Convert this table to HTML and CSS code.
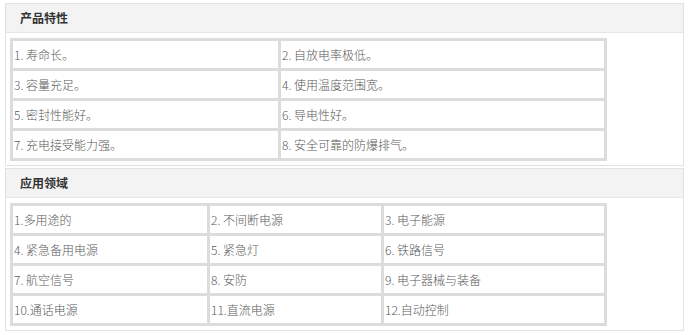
FILE: index.html
```html
<!DOCTYPE html>
<html lang="zh-CN">
<head>
<meta charset="utf-8">
<title>产品特性</title>
<link rel="stylesheet" href="styles.css">
</head>
<body>
  <section class="panel">
    <h3 class="panel-title">产品特性</h3>
    <div class="panel-body">
      <table class="spec spec-two">
        <tr><td>1. 寿命长。</td><td>2. 自放电率极低。</td></tr>
        <tr><td>3. 容量充足。</td><td>4. 使用温度范围宽。</td></tr>
        <tr><td>5. 密封性能好。</td><td>6. 导电性好。</td></tr>
        <tr><td>7. 充电接受能力强。</td><td>8. 安全可靠的防爆排气。</td></tr>
      </table>
    </div>
  </section>
  <section class="panel">
    <h3 class="panel-title">应用领域</h3>
    <div class="panel-body">
      <table class="spec spec-three">
        <tr><td>1.多用途的</td><td>2. 不间断电源</td><td>3. 电子能源</td></tr>
        <tr><td>4. 紧急备用电源</td><td>5. 紧急灯</td><td>6. 铁路信号</td></tr>
        <tr><td>7. 航空信号</td><td>8. 安防</td><td>9. 电子器械与装备</td></tr>
        <tr><td>10.通话电源</td><td>11.直流电源</td><td>12.自动控制</td></tr>
      </table>
    </div>
  </section>
</body>
</html>
```
FILE: styles.css
```css
html, body {
  background: #fff;
}

body {
  margin: 3px 9px 0 5px;
  font-family: "Noto Sans CJK SC", "Noto Sans", sans-serif;
  font-size: 12px;
  color: #555;
}

.panel {
  border: 1px solid #e2e2e2;
  margin-bottom: 2px;
}

.panel-title {
  margin: 0;
  height: 28px;
  line-height: 28px;
  padding-left: 14px;
  background: #f3f3f3;
  border-bottom: 1px solid #e6e6e6;
  font-size: 12px;
  font-weight: bold;
  color: #333;
}

.panel-body {
  padding: 5px 4px 4px 4px;
}

/* grid of spec cells: 3px grey rules between every cell */
.spec {
  width: 597px;
  border-collapse: separate;
  border-spacing: 0;
  border: 3px solid #dcdcdc;
  table-layout: fixed;
}

.spec td {
  height: 27px;
  padding: 0 0 0 1px;
  border-right: 3px solid #dcdcdc;
  border-bottom: 3px solid #dcdcdc;
  line-height: 18px;
  vertical-align: middle;
  white-space: nowrap;
  color: #5a5a5a;
  font-weight: 300;
}

.spec td:last-child {
  border-right: 0;
}

.spec tr:last-child td {
  border-bottom: 0;
}

.spec-two td:first-child {
  width: 264px;
}

.spec-three td:nth-child(1) {
  width: 193px;
}

.spec-three td:nth-child(2) {
  width: 170px;
}
```
